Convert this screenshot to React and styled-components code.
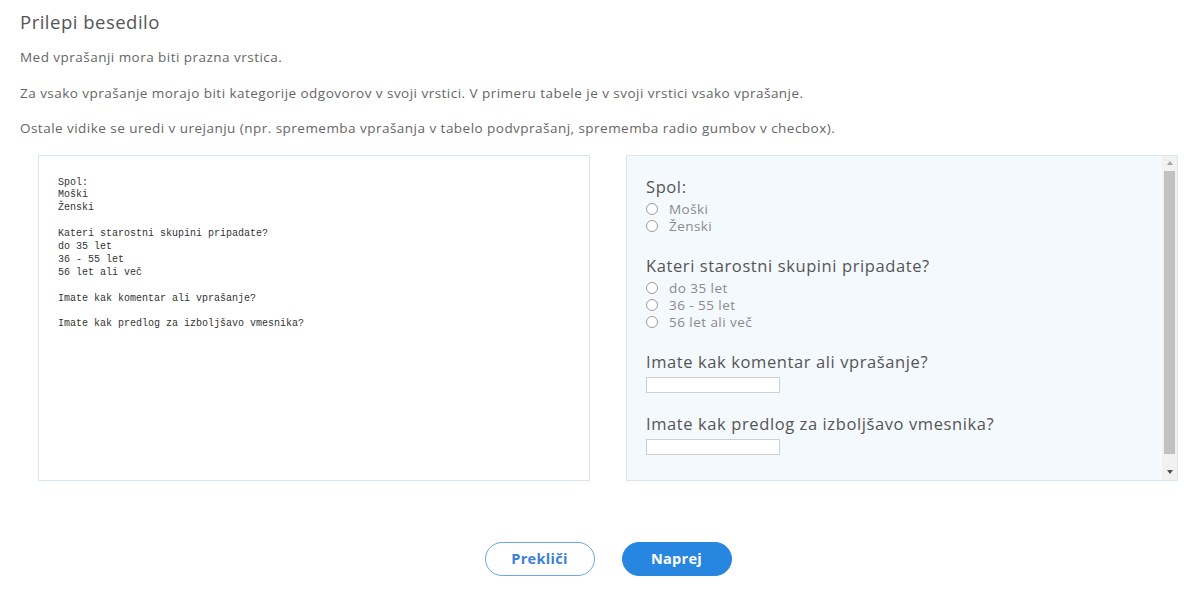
import React from 'react';
import styled, { createGlobalStyle } from 'styled-components';

const GlobalStyle = createGlobalStyle`
    body{
        margin: 0;
        background: #fff;
        font-family: "Open Sans", "Noto Sans", sans-serif;
    }
`;

const sourceText = `Spol:
Moški
Ženski

Kateri starostni skupini pripadate?
do 35 let
36 - 55 let
56 let ali več

Imate kak komentar ali vprašanje?

Imate kak predlog za izboljšavo vmesnika?`;

const questions = [
    { title: 'Spol:', type: 'radio', options: ['Moški', 'Ženski'] },
    { title: 'Kateri starostni skupini pripadate?', type: 'radio', options: ['do 35 let', '36 - 55 let', '56 let ali več'] },
    { title: 'Imate kak komentar ali vprašanje?', type: 'text' },
    { title: 'Imate kak predlog za izboljšavo vmesnika?', type: 'text' },
];

export default function App(){
    return(
        <>
        <GlobalStyle/>
        <Page>
            <Title>Prilepi besedilo</Title>
            <Hint>Med vprašanji mora biti prazna vrstica.</Hint>
            <Hint>Za vsako vprašanje morajo biti kategorije odgovorov v svoji vrstici. V primeru tabele je v svoji vrstici vsako vprašanje.</Hint>
            <Hint>Ostale vidike se uredi v urejanju (npr. sprememba vprašanja v tabelo podvprašanj, sprememba radio gumbov v checbox).</Hint>

            <Panels>
                <SourceBox>{sourceText}</SourceBox>

                <PreviewBox>
                    <PreviewContent>
                        {questions.map(q =>
                            <Question key={q.title}>
                                <QuestionTitle>{q.title}</QuestionTitle>
                                {q.type === 'radio'
                                    ? <Options>
                                        {q.options.map(o =>
                                            <Option key={o}><Radio/>{o}</Option>
                                        )}
                                      </Options>
                                    : <TextInput/>}
                            </Question>
                        )}
                    </PreviewContent>

                    {/* headless browser hides real scrollbars, so draw one */}
                    <ScrollTrack>
                        <ScrollButton><Arrow dir="up"/></ScrollButton>
                        <ScrollThumb/>
                        <ScrollButton><Arrow dir="down"/></ScrollButton>
                    </ScrollTrack>
                </PreviewBox>
            </Panels>

            <Buttons>
                <Button variant="outline">Prekliči</Button>
                <Button variant="primary">Naprej</Button>
            </Buttons>
        </Page>
        </>
    );
};

const Page = styled.div`
    padding: 11px 20px 20px 20px;
`;

const Title = styled.h2`
    margin: 0 0 15px 0;
    font-size: 18.5px;
    line-height: 22px;
    font-weight: 500;
    letter-spacing: 0.5px;
    color: #555;
`;

const Hint = styled.p`
    margin: 0 0 17px 0;
    font-size: 13.5px;
    line-height: 18.5px;
    letter-spacing: 0.47px;
    color: #666;
`;

const Panels = styled.div`
    margin: 0 0 0 18px;
    display: grid;
    grid-template-columns: 552px 552px;
    gap: 36px;
    height: 326px;
`;

const SourceBox = styled.div`
    box-sizing: border-box;
    height: 326px;
    border: 1px solid #d6e6f5;
    background: #fff;
    padding: 21px 19px;
    white-space: pre;
    font-family: "Liberation Mono", "DejaVu Sans Mono", monospace;
    font-size: 10px;
    line-height: 12.9px;
    color: #333;
`;

const PreviewBox = styled.div`
    box-sizing: border-box;
    height: 326px;
    border: 1px solid #d6e6f5;
    background: #f4f9fe;
    display: flex;
    overflow: hidden;
`;

const PreviewContent = styled.div`
    flex: 1;
    padding: 21px 19px 0 19px;
    overflow: hidden;
`;

const ScrollTrack = styled.div`
    width: 15px;
    flex: none;
    background: #f1f1f1;
    display: flex;
    flex-direction: column;
`;

const ScrollButton = styled.div`
    height: 15px;
    flex: none;
    display: flex;
    align-items: center;
    justify-content: center;

    &:last-child{
        margin-top: auto;
    }
`;

const Arrow = styled.span`
    width: 0;
    height: 0;
    border-left: 3.5px solid transparent;
    border-right: 3.5px solid transparent;
    border-bottom: ${props => props.dir === 'up' ? '4px solid #a3a3a3' : 'none'};
    border-top: ${props => props.dir === 'down' ? '4px solid #505050' : 'none'};
`;

const ScrollThumb = styled.div`
    height: 283px;
    margin: 0 2px;
    background: #c1c1c1;
`;

const Question = styled.div`
    margin-bottom: 21px;
`;

const QuestionTitle = styled.div`
    font-size: 16.5px;
    line-height: 20px;
    letter-spacing: 0.6px;
    color: #555;
`;

const Options = styled.div`
    margin-top: 4px;
`;

const Option = styled.div`
    display: flex;
    align-items: center;
    font-size: 13.5px;
    line-height: 17px;
    letter-spacing: 0.45px;
    color: #8a8a8a;
`;

const Radio = styled.span`
    box-sizing: border-box;
    width: 12px;
    height: 12px;
    border: 1px solid #9a9a9a;
    border-radius: 50%;
    background: #fff;
    margin-right: 11px;
`;

const TextInput = styled.input`
    display: block;
    box-sizing: border-box;
    margin-top: 5px;
    width: 134px;
    height: 16px;
    border: 1px solid #cfcfcf;
    background: #fff;
    padding: 0;
`;

const Buttons = styled.div`
    margin: 61px 0 0 18px;
    width: 1140px;
    display: flex;
    justify-content: center;
    gap: 27px;
`;

const Button = styled.button`
    box-sizing: border-box;
    width: 110px;
    height: 34px;
    border-radius: 17px;
    font-family: "Open Sans", "Noto Sans", sans-serif;
    font-size: 14.5px;
    font-weight: 700;
    letter-spacing: 0.3px;
    cursor: pointer;
    border: 1px solid ${props => props.variant === 'primary' ? '#2787e0' : '#6aa8ea'};
    background: ${props => props.variant === 'primary' ? '#2787e0' : '#fff'};
    color: ${props => props.variant === 'primary' ? '#fff' : '#3b7fd6'};
`;
